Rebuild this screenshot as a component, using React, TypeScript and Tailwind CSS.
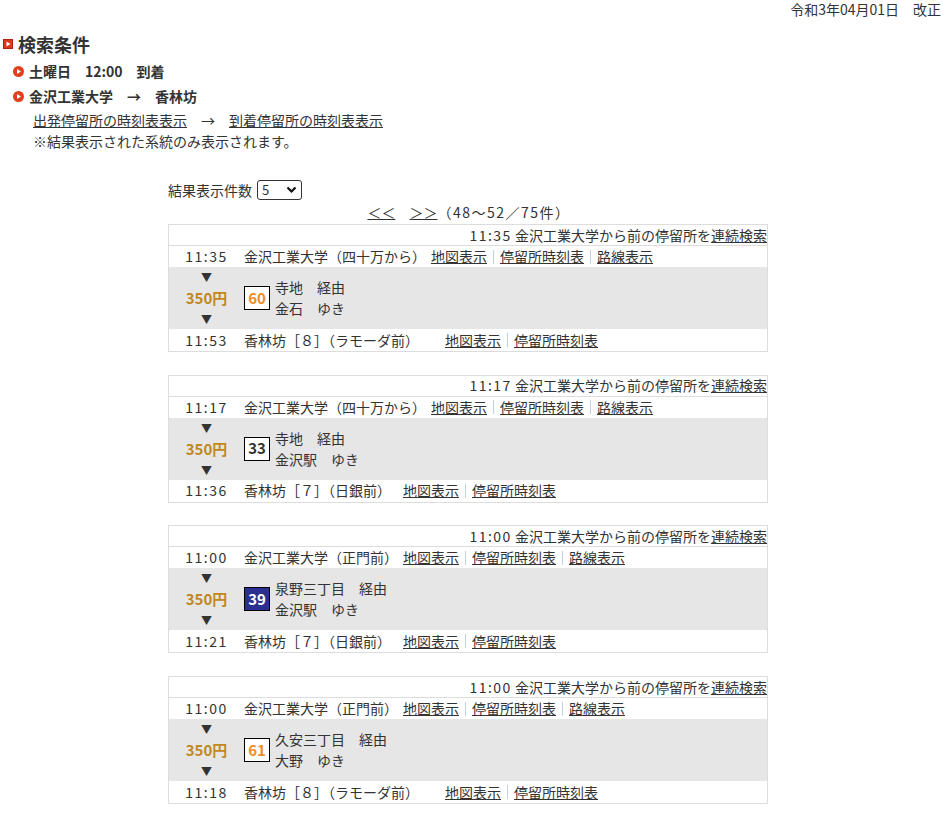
import React from "react";

type Card = {
  hdr: string;
  dep: string;
  depStop: string;
  depW: string;
  num: string;
  numStyle: "orange" | "dark" | "blue";
  via: string;
  dest: string;
  arr: string;
  arrStop: string;
  arrW: string;
};

const cards: Card[] = [
  { hdr: "11:35", dep: "11:35", depStop: "金沢工業大学（四十万から）", depW: "w-[187px]", num: "60", numStyle: "orange", via: "寺地　経由", dest: "金石　ゆき", arr: "11:53", arrStop: "香林坊［８］（ラモーダ前）", arrW: "w-[201px]" },
  { hdr: "11:17", dep: "11:17", depStop: "金沢工業大学（四十万から）", depW: "w-[187px]", num: "33", numStyle: "dark", via: "寺地　経由", dest: "金沢駅　ゆき", arr: "11:36", arrStop: "香林坊［７］（日銀前）", arrW: "w-[159px]" },
  { hdr: "11:00", dep: "11:00", depStop: "金沢工業大学（正門前）", depW: "w-[159px]", num: "39", numStyle: "blue", via: "泉野三丁目　経由", dest: "金沢駅　ゆき", arr: "11:21", arrStop: "香林坊［７］（日銀前）", arrW: "w-[159px]" },
  { hdr: "11:00", dep: "11:00", depStop: "金沢工業大学（正門前）", depW: "w-[159px]", num: "61", numStyle: "orange", via: "久安三丁目　経由", dest: "大野　ゆき", arr: "11:18", arrStop: "香林坊［８］（ラモーダ前）", arrW: "w-[201px]" },
];

function Sep() {
  return <span className="inline-block w-px h-[14px] bg-[#bcd2e8] mx-[6px]" />;
}

function Links({ route }: { route: boolean }) {
  return (
    <span className="flex items-center">
      <span className="underline">地図表示</span>
      <Sep />
      <span className="underline">停留所時刻表</span>
      {route && (
        <>
          <Sep />
          <span className="underline">路線表示</span>
        </>
      )}
    </span>
  );
}

function NumBox({ num, s }: { num: string; s: Card["numStyle"] }) {
  const cls =
    s === "orange"
      ? "bg-white text-[#f08c28]"
      : s === "dark"
      ? "bg-white text-[#333333]"
      : "bg-[#2b2f8f] text-white";
  return (
    <div className={`w-[26px] h-[24px] border border-black flex items-center justify-center font-bold text-[15px] ${cls}`}>
      {num}
    </div>
  );
}

function CardView({ c }: { c: Card }) {
  return (
    <div className="w-[600px] border border-[#dddddd] mb-[22.7px]">
      <div className="h-[21px] border-b border-[#dddddd] flex items-center justify-end leading-[21px]">
        <span className="tracking-[1.5px]">{c.hdr}</span>
        <span>&nbsp;金沢工業大学から前の停留所を</span>
        <span className="underline">連続検索</span>
      </div>
      <div className="h-[21px] flex items-center leading-[21px]">
        <div className="w-[75px] text-center tracking-[1.5px]">{c.dep}</div>
        <span className={`${c.depW} shrink-0 whitespace-nowrap`}>{c.depStop}</span>
        <Links route={true} />
      </div>
      <div className="h-[62px] bg-[#e6e6e6] flex items-center">
        <div className="w-[75px] flex flex-col items-center">
          <span className="text-[11px] leading-[20px] text-[#333333]">▼</span>
          <span className="font-bold text-[15px] leading-[22px] text-[#c0881f]">350円</span>
          <span className="text-[11px] leading-[20px] text-[#333333]">▼</span>
        </div>
        <NumBox num={c.num} s={c.numStyle} />
        <div className="ml-[5px] flex flex-col leading-[21px]">
          <span>{c.via}</span>
          <span>{c.dest}</span>
        </div>
      </div>
      <div className="h-[22px] flex items-center leading-[21px]">
        <div className="w-[75px] text-center tracking-[1.5px]">{c.arr}</div>
        <span className={`${c.arrW} shrink-0 whitespace-nowrap`}>{c.arrStop}</span>
        <Links route={false} />
      </div>
    </div>
  );
}

export default function App() {
  return (
    <div
      className="w-[945px] min-h-[820px] bg-white text-[#333333] text-[14px]"
      style={{ fontFamily: '"Noto Sans CJK JP", "Noto Sans", sans-serif' }}
    >
      <div className="text-right pr-[4px] leading-[18px] h-[18px]">令和3年04月01日　改正</div>

      <div className="mt-[14px] pl-[3px] flex items-center h-[24px]">
        <svg width="10" height="10" viewBox="0 0 10 10" className="shrink-0">
          <rect x="0.5" y="0.5" width="9" height="9" fill="#d9391c" stroke="#a8220e" />
          <polygon points="3.5,2.5 7.5,5 3.5,7.5" fill="#ffffff" />
        </svg>
        <span className="ml-[5px] font-bold text-[18px] leading-[24px]">検索条件</span>
      </div>

      <div className="mt-[3px] pl-[13px]">
        <div className="flex items-center h-[25px]">
          <svg width="11" height="11" viewBox="0 0 11 11" className="shrink-0">
            <circle cx="5.5" cy="5.5" r="5.5" fill="#e2401c" />
            <polygon points="4,3 8,5.5 4,8" fill="#ffffff" />
          </svg>
          <span className="ml-[5px] font-bold leading-[25px] whitespace-pre">土曜日　12:00　到着</span>
        </div>
        <div className="flex items-center h-[25px]">
          <svg width="11" height="11" viewBox="0 0 11 11" className="shrink-0">
            <circle cx="5.5" cy="5.5" r="5.5" fill="#e2401c" />
            <polygon points="4,3 8,5.5 4,8" fill="#ffffff" />
          </svg>
          <span className="ml-[5px] font-bold leading-[25px] whitespace-pre">金沢工業大学　→　香林坊</span>
        </div>
      </div>

      <div className="pl-[33px] mt-[1px]">
        <div className="leading-[21px] whitespace-pre">
          <span className="underline">出発停留所の時刻表表示</span>
          <span>　→　</span>
          <span className="underline">到着停留所の時刻表表示</span>
        </div>
        <div className="leading-[21px]">※結果表示された系統のみ表示されます。</div>
      </div>

      <div className="pl-[168px] mt-[28px]">
        <div className="flex items-center h-[20px]">
          <span>結果表示件数</span>
          <div className="ml-[5px] w-[45px] h-[20px] border border-[#333333] rounded-[3px] flex items-center justify-between pl-[4px] pr-[4px] bg-white">
            <span className="text-[13px] leading-[18px]">5</span>
            <svg width="11" height="8" viewBox="0 0 11 8">
              <polyline points="1.5,1.5 5.5,5.5 9.5,1.5" fill="none" stroke="#111111" strokeWidth="2.2" />
            </svg>
          </div>
        </div>
        <div className="w-[600px] h-[20px] leading-[20px] mt-[2px] mb-[2px] flex justify-center pl-[2px]">
          <span className="underline">＜＜</span>
          <span>　</span>
          <span className="underline">＞＞</span>
          <span className="tracking-[1.5px]">（48～52／75件）</span>
        </div>
        {cards.map((c, i) => (
          <CardView key={i} c={c} />
        ))}
      </div>
    </div>
  );
}
